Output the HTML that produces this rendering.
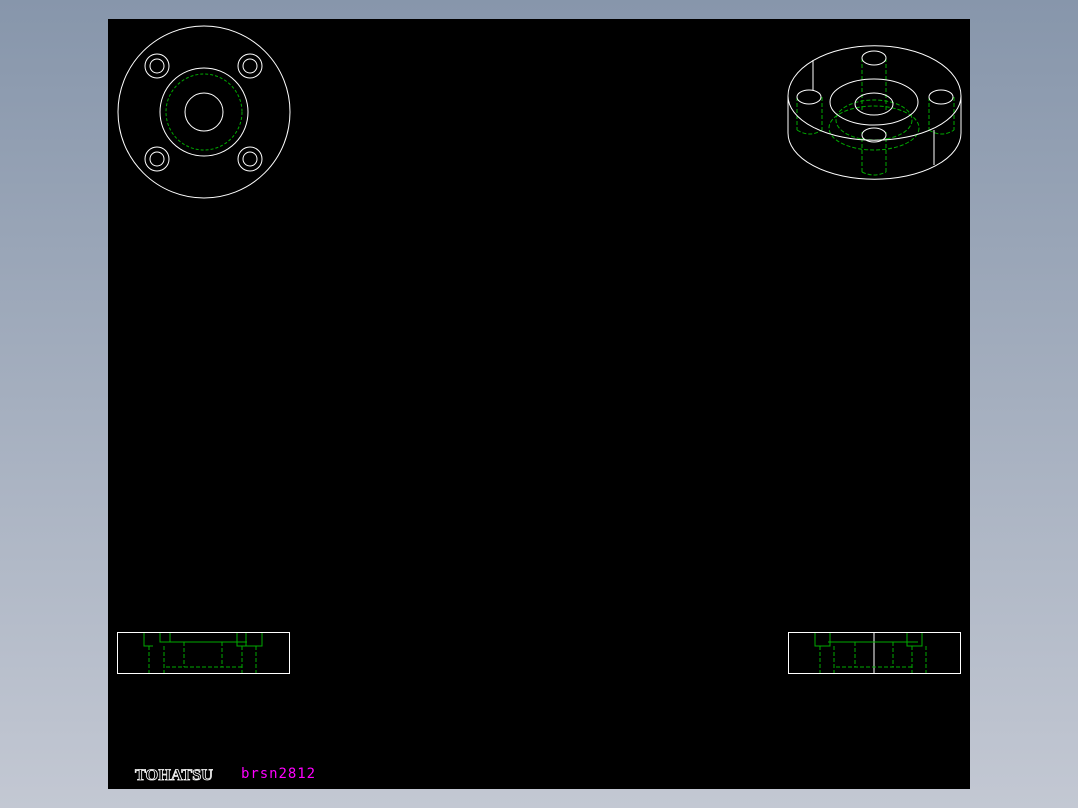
<!DOCTYPE html>
<html><head><style>
body{margin:0;width:1078px;height:808px;overflow:hidden;background:linear-gradient(#8796ab,#c3c8d3);font-family:"Liberation Sans",sans-serif}
svg{position:absolute;left:0;top:0}
</style></head><body>
<svg width="1078" height="808" viewBox="0 0 1078 808">
<rect x="108" y="19" width="862" height="770" fill="#000"/>
<g fill="none" stroke="#fff" stroke-width="1">
<circle cx="204" cy="112" r="86"/>
<circle cx="204" cy="112" r="44"/>
<circle cx="204" cy="112" r="19"/>
<circle cx="157" cy="66" r="12"/><circle cx="157" cy="66" r="7"/>
<circle cx="250" cy="66" r="12"/><circle cx="250" cy="66" r="7"/>
<circle cx="157" cy="159" r="12"/><circle cx="157" cy="159" r="7"/>
<circle cx="250" cy="159" r="12"/><circle cx="250" cy="159" r="7"/>
</g>
<circle cx="204" cy="112" r="38" fill="none" stroke="#0a0" stroke-dasharray="3,2"/>
<g fill="none" stroke="#0a0" stroke-dasharray="4,2">
<ellipse cx="874" cy="120" rx="38" ry="20"/>
<ellipse cx="874" cy="128" rx="45" ry="22"/>
<path d="M797 97 V130 M822 97 V130 M929 97 V130 M954 97 V130 M862 58 V110 M886 58 V110 M862 132 V172 M886 132 V172"/>
<path d="M797 130 Q810 138 822 130 M929 130 Q942 138 954 130 M862 172 Q874 178 886 172"/>
</g>
<g fill="none" stroke="#fff">
<path d="M788 96 A86 50 0 0 1 961 96 V133 A86 46 0 0 1 788 133 Z"/>
<path d="M788 96 A86 44 0 0 0 961 96"/>
<ellipse cx="874" cy="102" rx="44" ry="23"/>
<ellipse cx="874" cy="104" rx="19" ry="11"/>
<ellipse cx="874" cy="58" rx="12" ry="7"/>
<ellipse cx="809" cy="97" rx="12" ry="7"/>
<ellipse cx="941" cy="97" rx="12" ry="7"/>
<ellipse cx="874" cy="135" rx="12" ry="7"/>
<path d="M934 130 V165 M813 60 V90"/>
</g>
<g fill="none" stroke="#fff"><rect x="117.5" y="632.5" width="172" height="41"/><rect x="788.5" y="632.5" width="172" height="41"/><path d="M874 633 V673"/></g>
<g fill="none" stroke="#0a0">
<path d="M144 633 V646 H153 M237 633 V646 H246 M246 633 V646 H262 V633 M160 633 V642 H247 M170 633 V642"/>
<path stroke-dasharray="4,2" d="M149 646 V673 M164 646 V673 M256 646 V673 M242 646 V673 M166 667 H242 M184 642 V667 M222 642 V667"/>
<path d="M815 633 V646 H830 V633 M907 633 V646 H922 V633 M828 642 H918"/>
<path stroke-dasharray="4,2" d="M820 646 V673 M834 646 V673 M912 646 V673 M926 646 V673 M836 667 H912 M855 642 V667 M893 642 V667"/>
</g>
<text x="135" y="780" textLength="78" lengthAdjust="spacingAndGlyphs" font-family="Liberation Serif,serif" font-weight="bold" font-size="16" fill="#000" stroke="#fff" stroke-width="0.8">TOHATSU</text>
<text x="241" y="778" textLength="74" lengthAdjust="spacing" font-family="DejaVu Sans Mono,monospace" font-size="14" fill="#f0f">brsn2812</text>
</svg>
</body></html>
